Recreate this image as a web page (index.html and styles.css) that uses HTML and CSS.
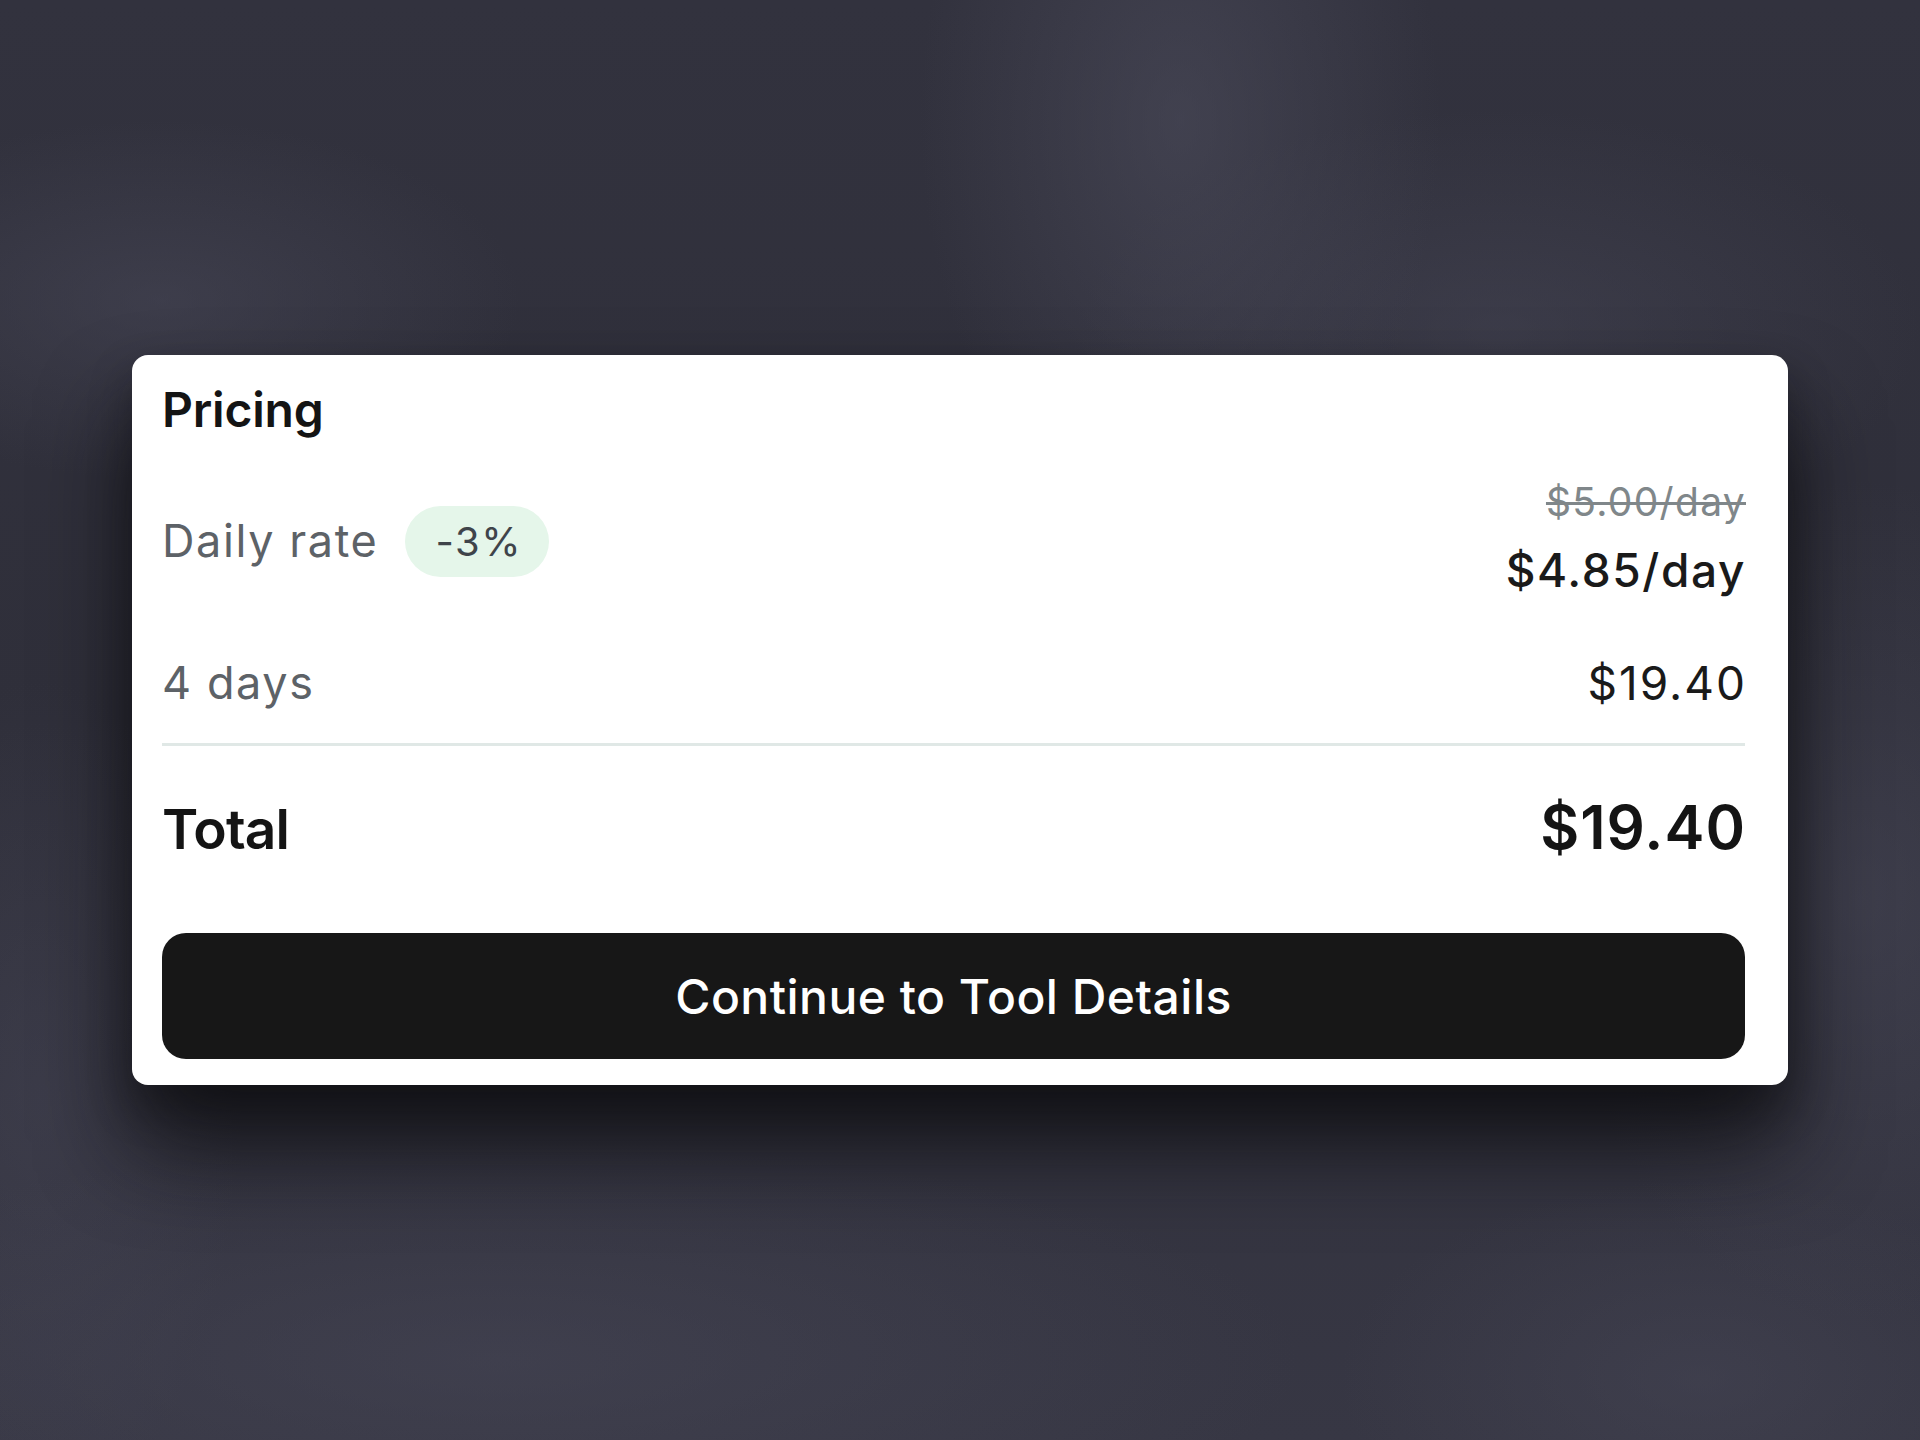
FILE: index.html
```html
<!DOCTYPE html>
<html lang="en">
<head>
<meta charset="utf-8">
<title>Pricing</title>
<link rel="stylesheet" href="styles.css">
</head>
<body>
<div class="stage">
  <section class="card">
    <h2 class="card-title">Pricing</h2>
    <div class="row row-rate">
      <div class="rate-label">
        <span class="label">Daily rate</span>
        <span class="badge">-3%</span>
      </div>
      <div class="rate-values">
        <span class="old-price">$5.00/day</span>
        <span class="new-price">$4.85/day</span>
      </div>
    </div>
    <div class="row row-days">
      <span class="label">4 days</span>
      <span class="amount">$19.40</span>
    </div>
    <hr class="divider">
    <div class="row row-total">
      <span class="total-label">Total</span>
      <span class="total-amount">$19.40</span>
    </div>
    <button class="cta" type="button">Continue to Tool Details</button>
  </section>
</div>
</body>
</html>
```
FILE: styles.css
```css
* { box-sizing: border-box; }

html, body {
  margin: 0;
  padding: 0;
}

body {
  width: 1920px;
  height: 1440px;
  font-family: Inter, "Noto Sans", "Liberation Sans", sans-serif;
  background-color: #31313d;
  background-image:
    radial-gradient(ellipse 260px 420px at 1180px 120px, rgba(78,78,94,0.55), rgba(78,78,94,0) 100%),
    radial-gradient(ellipse 360px 180px at 160px 300px, rgba(74,74,90,0.5), rgba(74,74,90,0) 100%),
    radial-gradient(ellipse 420px 220px at 1500px 330px, rgba(74,74,90,0.45), rgba(74,74,90,0) 100%),
    radial-gradient(ellipse 300px 420px at 1860px 900px, rgba(74,74,90,0.5), rgba(74,74,90,0) 100%),
    radial-gradient(ellipse 800px 220px at 500px 1360px, rgba(72,72,88,0.5), rgba(72,72,88,0) 100%),
    radial-gradient(ellipse 360px 200px at 1700px 1380px, rgba(72,72,88,0.45), rgba(72,72,88,0) 100%),
    radial-gradient(ellipse 200px 420px at 40px 1100px, rgba(72,72,88,0.4), rgba(72,72,88,0) 100%),
    linear-gradient(180deg, #32323e 0%, #2f2f3a 50%, #373744 100%);
}

.stage {
  width: 1920px;
  height: 1440px;
  display: flex;
  align-items: center;
  justify-content: center;
}

.card {
  width: 1656px;
  background: #ffffff;
  border-radius: 16px;
  padding: 26px 43px 26px 30px;
  display: flex;
  flex-direction: column;
  box-shadow: 0 60px 90px rgba(12, 12, 14, 0.78), 0 20px 40px rgba(12, 12, 14, 0.35);
}

.card-title {
  margin: 0;
  font-size: 48px;
  line-height: 58px;
  font-weight: 600;
  color: #141414;
  letter-spacing: -0.2px;
}

.row {
  display: flex;
  justify-content: space-between;
  align-items: center;
}

.row-rate {
  padding-top: 37px;
}

.rate-label {
  display: flex;
  align-items: center;
  gap: 27px;
  margin-top: 6px;
}

.label {
  font-size: 45px;
  line-height: 54px;
  color: #5d6267;
  letter-spacing: 1.6px;
}

.badge {
  display: inline-flex;
  align-items: center;
  height: 71px;
  padding: 0 27px 0 30px;
  border-radius: 36px;
  background: #e5f6ea;
  color: #3f444a;
  font-size: 40px;
  letter-spacing: 1.6px;
}

.rate-values {
  display: flex;
  flex-direction: column;
  align-items: flex-end;
  gap: 12px;
}

.old-price {
  font-size: 39px;
  line-height: 52px;
  color: #80878a;
  text-decoration: line-through;
  text-decoration-thickness: 3px;
  letter-spacing: 1.3px;
  margin-right: -1px;
}

.new-price {
  font-size: 46px;
  line-height: 60px;
  font-weight: 500;
  color: #1a1a1a;
  letter-spacing: 1.6px;
  margin-right: -1px;
}

.row-days {
  padding-top: 56px;
}

.amount {
  font-size: 46px;
  line-height: 54px;
  color: #1a1a1a;
  letter-spacing: 2px;
  margin-right: -2px;
}

.divider {
  margin: 33px 0 0;
  border: 0;
  height: 3px;
  background: #e0e8e6;
}

.row-total {
  padding-top: 47px;
  align-items: baseline;
}

.total-label {
  font-size: 55px;
  line-height: 68px;
  font-weight: 600;
  color: #141414;
  letter-spacing: -0.8px;
}

.total-amount {
  font-size: 60px;
  line-height: 68px;
  font-weight: 600;
  color: #141414;
  letter-spacing: 1px;
  margin-right: -1px;
}

.cta {
  margin-top: 70px;
  height: 126px;
  width: 100%;
  border: 0;
  border-radius: 24px;
  background: #171717;
  color: #ffffff;
  font-family: inherit;
  font-size: 48px;
  font-weight: 500;
  letter-spacing: 0.01em;
  cursor: pointer;
}
```
